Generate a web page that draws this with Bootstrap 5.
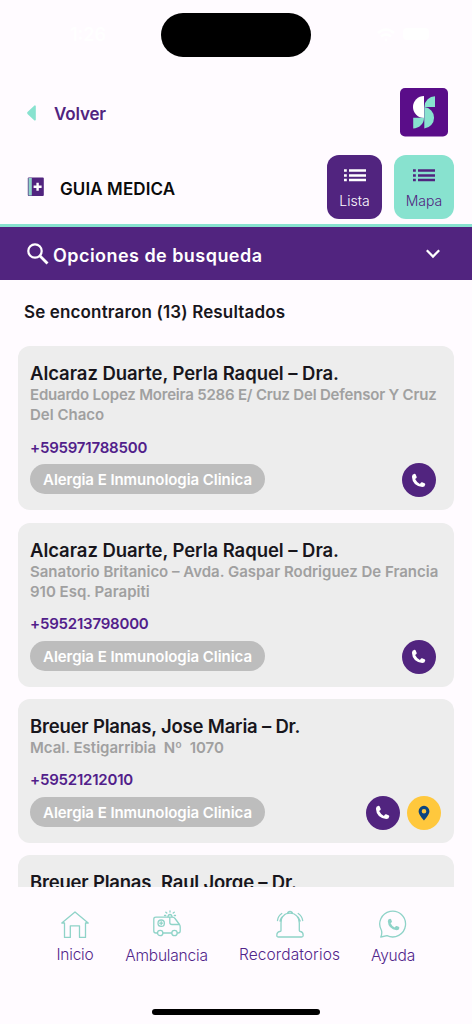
<!DOCTYPE html>
<html lang="es">
<head>
<meta charset="utf-8">
<meta name="viewport" content="width=device-width, initial-scale=1">
<title>Guia Medica</title>
<link href="https://cdn.jsdelivr.net/npm/bootstrap@5.3.0/dist/css/bootstrap.min.css" rel="stylesheet">
<style>
:root{--violet:#51247f;--mint:#88e2cf;--line:#8fd3c8}
body{font-family:Inter,"Noto Sans",sans-serif;background:#fffbff;color:#18161c;font-weight:600}
.screen{width:472px;height:1024px}
.violet{color:var(--violet)}
.status-row{height:70px;padding-top:13px}
.island{width:150px;height:44px}
.clock{color:#fff;font-size:18px;line-height:20px;width:95px;text-align:right;padding-top:12px;margin:0 55px 0 11px}
.status-icons{width:118px;padding-top:15px}
.top-row{height:84px;padding:18.3px 24px 0 27px}
.back-arrow{margin-top:17px}
.volver{font-size:17px;line-height:24px;margin:14px 0 0 18px;letter-spacing:-.15px}
.title-row{height:70px;padding:.5px 18px 0 27px}
.book{margin-top:22.500px}
.guide{font-size:17px;color:#0b0b0b;line-height:24px;margin:22.500px 0 0 16px;letter-spacing:.1px}
.mode{height:64px;border-radius:12px;font-weight:300;font-size:14px;line-height:20px;padding-top:13px}
.mode svg{display:block;margin:0 auto 9px}
.mode-list{width:55px;background:var(--violet);color:#fff}
.mode-map{width:60px;background:var(--mint);color:var(--violet);margin-left:12px}
.search-bar{height:56px;border-top:3px solid var(--mint);background:var(--violet);color:#fff;padding:0 32px 0 27px}
.search-bar b{font-size:18px;line-height:24px;font-weight:600;margin:5px 0 0 4px;letter-spacing:.456px}
.found{font-size:17px;line-height:24px;padding:20px 24px 22px;letter-spacing:.146px}
.results{height:541px;padding:0 18px}
.doctor{background:#ededed;border-radius:12px;padding:15px 12px 13px;margin-bottom:12.3px;width:435.6px}
.doctor h2{font-size:18.5px;line-height:24px;font-weight:600;margin:0;white-space:nowrap;letter-spacing:-.049px}
.doctor .tight{letter-spacing:-.2px}
.addr{font-size:15px;line-height:20.4px;color:#a0a0a0;white-space:nowrap}
.phone{font-size:15px;line-height:20px;margin-top:12px;color:#51208a;letter-spacing:-.2px}
.chip{height:30px;border-radius:15px;background:#bdbdbd;color:#fff;font-size:15px;line-height:32px;width:235px;margin-top:1px;text-align:center;white-space:nowrap;letter-spacing:-.054px}
.act{width:34px;height:34px;border-radius:50%;background:var(--violet)}
.act-pin{background:#ffc83d;margin:0 1px 0 7px}
.alone{margin-right:6px}
.acts{margin-top:5.4px}
.tabs{height:137px;padding:23px 0 0 56px;gap:31px;font-weight:300;font-size:15.5px;line-height:20px;color:#51248a}
.tab{text-align:center;letter-spacing:-.2px;width:38px}
.tab svg{display:block;margin:0 auto 7px;fill:none;stroke:var(--line);stroke-width:1.3;stroke-linejoin:round;stroke-linecap:round}
.tab-amb{width:83px}
.tab-rec{width:101px;letter-spacing:.09px}
.tab-help{width:44px}
.tab-amb svg,.tab-help svg{margin-bottom:8px}
.home-bar{width:168px;height:6px;border-radius:3px;background:#000;left:152px;top:1008.5px}
</style>
</head>
<body>
<svg class="d-none">
  <symbol id="tel" viewBox="0 0 16 16"><path d="M3.700.8Q1 1.200 1 4Q1.500 13.500 12 15Q14.800 15 15.200 12.300Q15.300 11.300 14.400 10.900L11.900 9.900Q11.200 9.700 10.700 10.200L9.500 11.600Q6 10 4.400 6.500L5.800 5.300Q6.300 4.800 6 4.100L5 1.600Q4.600.7 3.700.8Z"/></symbol>
  <symbol id="rows" viewBox="0 0 22 14"><path d="M0 2.500h2.800M5 2.500h17M0 7.500h2.800M5 7.500h17M0 12h2.800M5 12h17" stroke="currentColor" stroke-width="2.500"/></symbol>
</svg>
<div class="screen position-relative overflow-hidden d-flex flex-column">
  <div class="status-row d-flex">
    <div class="clock">1:26</div>
    <div class="island bg-black rounded-pill"></div>
    <div class="status-icons d-flex justify-content-end gap-2">
      <svg width="18" height="14" viewBox="0 0 18 14" fill="none" stroke="#fff" stroke-width="2.500"><path d="M1 5q8-7 16 0M4 8.500q5-4 10 0M8 12h2"/></svg>
      <svg width="26" height="12"><rect width="26" height="12" rx="4" fill="#fff"/></svg>
    </div>
  </div>
  <div class="top-row d-flex align-items-start">
    <svg class="back-arrow" width="9" height="16" viewBox="0 0 9 16"><path d="M8 1.200V14.800L1.300 8.600Q.7 8 1.300 7.400Z" fill="#88e2cf" stroke="#88e2cf" stroke-width="1.600" stroke-linejoin="round"/></svg>
    <span class="volver violet">Volver</span>
    <svg class="ms-auto" width="48" height="49" viewBox="0 0 48 49"><rect width="48" height="48.500" rx="5" fill="#5a0d89"/><path d="M24 8V30A11 11 0 0 1 24 8Z" fill="#fff"/><path d="M24.500 19V18.500A10.500 10.500 0 0 1 35 8.300V19ZM24.300 19A10.800 10.800 0 0 1 24.300 40.500ZM13.200 29.700H24A10.800 10.800 0 0 1 13.200 40.500Z" fill="#88e2cf"/></svg>
  </div>
  <div class="title-row d-flex">
    <svg class="book" width="17" height="20" viewBox="0 0 17 20"><rect x=".8" y=".5" width="16" height="18.500" rx="1" fill="#51247f"/><path d="M1.500 1h3.300v17.500H1.500z" fill="#8fd3c8"/><path d="M10.600 5.800v8M6.600 9.800h8" stroke="#fff" stroke-width="2.400"/></svg>
    <span class="guide">GUIA MEDICA</span>
    <div class="mode mode-list text-center ms-auto"><svg width="22" height="14"><use href="#rows"/></svg>Lista</div>
    <div class="mode mode-map text-center"><svg width="22" height="14"><use href="#rows"/></svg>Mapa</div>
  </div>
  <div class="search-bar d-flex align-items-center">
    <svg width="22" height="22" viewBox="0 0 22 22" fill="none" stroke="#fff"><circle cx="8" cy="8" r="6.700" stroke-width="2.200"/><path d="M12.800 12.800L20.500 20.500" stroke-width="2.800"/></svg>
    <b>Opciones de busqueda</b>
    <svg class="ms-auto" width="14" height="10" viewBox="0 0 14 10" fill="none" stroke="#fff" stroke-width="2.300"><path d="M.8 1.200L7 7.500L13.200 1.200"/></svg>
  </div>
  <div class="found">Se encontraron (13) Resultados</div>
  <div class="results overflow-hidden">
    <article class="doctor">
      <h2>Alcaraz Duarte, Perla Raquel – Dra.</h2>
      <div class="addr"><span class="tight">Eduardo Lopez Moreira 5286 E/ Cruz Del Defensor Y Cruz</span><br>Del Chaco</div>
      <div class="phone">+595971788500</div>
      <div class="acts d-flex"><span class="chip">Alergia E Inmunologia Clinica</span><span class="act alone ms-auto d-flex align-items-center justify-content-center"><svg width="15" height="15" fill="#fff"><use href="#tel"/></svg></span></div>
    </article>
    <article class="doctor">
      <h2>Alcaraz Duarte, Perla Raquel – Dra.</h2>
      <div class="addr">Sanatorio Britanico – Avda. Gaspar Rodriguez De Francia<br>910 Esq. Parapiti</div>
      <div class="phone">+595213798000</div>
      <div class="acts d-flex"><span class="chip">Alergia E Inmunologia Clinica</span><span class="act alone ms-auto d-flex align-items-center justify-content-center"><svg width="15" height="15" fill="#fff"><use href="#tel"/></svg></span></div>
    </article>
    <article class="doctor">
      <h2 class="tight">Breuer Planas, Jose Maria – Dr.</h2>
      <div class="addr">Mcal. Estigarribia&nbsp; Nº&nbsp; 1070</div>
      <div class="phone">+59521212010</div>
      <div class="acts d-flex"><span class="chip">Alergia E Inmunologia Clinica</span><span class="act ms-auto d-flex align-items-center justify-content-center"><svg width="15" height="15" fill="#fff"><use href="#tel"/></svg></span><span class="act act-pin d-flex align-items-center justify-content-center"><svg width="12" height="16" viewBox="0 0 12 16"><path fill-rule="evenodd" d="M6 .8A5.400 5.400 0 0 0 .6 6.200C.6 9.800 6 15.500 6 15.500S11.400 9.800 11.400 6.200A5.400 5.400 0 0 0 6 .8ZM6 3.900A2.300 2.300 0 1 1 6 8.500A2.300 2.300 0 0 1 6 3.900Z" fill="#0b4480"/></svg></span></div>
    </article>
    <article class="doctor"><h2 class="tight">Breuer Planas, Raul Jorge – Dr.</h2><div class="addr">&nbsp;</div></article>
  </div>
  <nav class="tabs d-flex">
    <div class="tab"><svg width="28" height="28" viewBox="0 0 28 28"><path d="M.8 13L14 2L27.200 13H24.500V27.500H18.500V15.800H9.300V27.500H3.500V13Z"/></svg>Inicio</div>
    <div class="tab tab-amb"><svg width="28" height="28" viewBox="0 0 28 28"><path d="M4.500 23H3Q.8 23 .8 21V9Q.8 7.200 3 7.200H19.500Q21 7.200 22 8.500L26.500 14.500Q27.200 15.500 27.200 17V21Q27.200 23 25 23H24.500M18.500 23H10M16.800 7.200V12.500Q16.800 14.500 19 14.500H26.500"/><circle cx="7.200" cy="23" r="2.700"/><circle cx="21.500" cy="23" r="2.700"/><circle cx="8.200" cy="13.200" r="3.200"/><path d="M8.200 11.700v3M6.700 13.200h3M15 6.800Q15.200 4.500 17 4.500T19 6.800M17 .8V2M12.800 2.200L13.800 3.100M21.300 2.200L20.200 3.100M11.500 5.500h1.200M21.300 5.500h1.200"/></svg>Ambulancia</div>
    <div class="tab tab-rec"><svg width="28" height="28" viewBox="0 0 28 28"><path d="M5 20.500V13C5 7 8.500 3.200 14 3.200S23.300 7 23.300 13V20.500Q23.300 21.500 24.500 21.500Q27.200 22 27.200 25.500Q27.200 27 25.500 27H2.500Q.8 27 .8 25.500Q.8 22 3.800 21.500Q5 21.500 5 20.500ZM11.500 3.500Q11.800 1.300 14 1.300T16.500 3.500M5.800 3.500Q2 6 1.500 10.500M8 5.500Q5 7 4 11M22.200 3.500Q26 6 26.700 10.500M20.200 5.500Q23 7 24.200 11"/></svg>Recordatorios</div>
    <div class="tab tab-help"><svg width="28" height="28" viewBox="0 0 28 28"><path d="M2.500 20.500A12.900 12.900 0 1 1 8 25.600L1.800 27Q3.300 23.500 2.500 20.500Z"/><use href="#tel" x="8" y="8" width="13" height="13" fill="#8fd3c8" stroke="none"/></svg>Ayuda</div>
  </nav>
  <div class="home-bar position-absolute"></div>
</div>
<script src="https://cdn.jsdelivr.net/npm/bootstrap@5.3.0/dist/js/bootstrap.bundle.min.js"></script>
</body>
</html>
